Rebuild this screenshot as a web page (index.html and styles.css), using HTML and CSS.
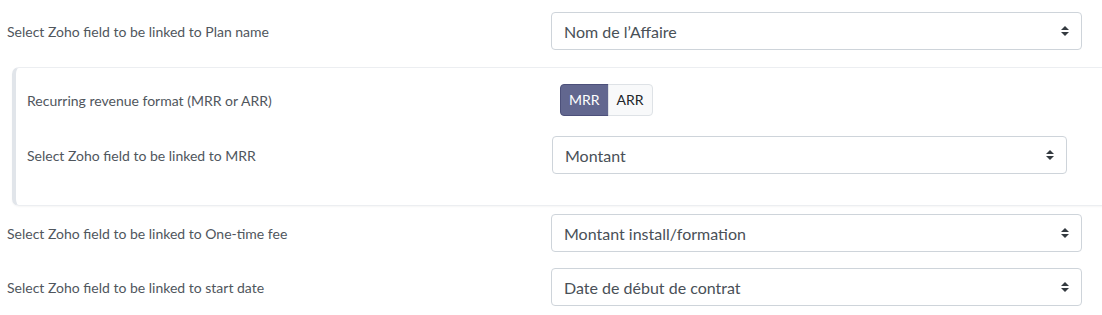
FILE: index.html
```html
<!DOCTYPE html>
<html lang="en">
<head>
    <meta charset="UTF-8">
    <meta name="viewport" content="width=device-width, initial-scale=1.0">
    <title>Zoho field mapping</title>
    <link rel="stylesheet" href="styles.css">
</head>
<body>
    <div class="mapping">
        <div class="form-row first">
            <label>Select Zoho field to be linked to Plan name</label>
            <div class="select">
                <span>Nom de l’Affaire</span>
                <svg width="8" height="10" viewBox="0 0 4 5"><path fill="#343a40" d="M2 0L0 2h4zm0 5L0 3h4z"/></svg>
            </div>
        </div>

        <div class="panel">
            <div class="panel-row">
                <label>Recurring revenue format (MRR or ARR)</label>
                <div class="btn-group">
                    <button class="btn active">MRR</button>
                    <button class="btn">ARR</button>
                </div>
            </div>
            <div class="panel-row second">
                <label>Select Zoho field to be linked to MRR</label>
                <div class="select">
                    <span>Montant</span>
                    <svg width="8" height="10" viewBox="0 0 4 5"><path fill="#343a40" d="M2 0L0 2h4zm0 5L0 3h4z"/></svg>
                </div>
            </div>
        </div>

        <div class="form-row after-panel">
            <label>Select Zoho field to be linked to One-time fee</label>
            <div class="select">
                <span>Montant install/formation</span>
                <svg width="8" height="10" viewBox="0 0 4 5"><path fill="#343a40" d="M2 0L0 2h4zm0 5L0 3h4z"/></svg>
            </div>
        </div>

        <div class="form-row">
            <label>Select Zoho field to be linked to start date</label>
            <div class="select">
                <span>Date de début de contrat</span>
                <svg width="8" height="10" viewBox="0 0 4 5"><path fill="#343a40" d="M2 0L0 2h4zm0 5L0 3h4z"/></svg>
            </div>
        </div>
    </div>
</body>
</html>
```

FILE: styles.css
```css
body {
    margin: 0;
    font-family: Lato, "Open Sans", Arial, sans-serif;
    color: #495057;
    background-color: #fff;
}
label {
    font-size: 14px;
    color: #50565d;
}
.form-row {
    display: grid;
    grid-template-columns: 544px 531px;
    align-items: center;
    padding-left: 7px;
    margin-top: 16px;
}
.form-row.first {
    margin-top: 12px;
}
.form-row.after-panel {
    margin-top: 8px;
}
.select {
    display: flex;
    align-items: center;
    justify-content: space-between;
    height: 36px;
    padding: 0 12px;
    border: 1px solid #ced4da;
    border-radius: 4px;
    font-size: 16px;
    color: #495057;
    background-color: #fff;
}
.panel {
    margin: 17px 0 0 12px;
    width: 1081px;
    padding: 16px 0 31px 11px;
    border: 1px solid #eceef1;
    border-left: 4px solid #e1e5ea;
    border-radius: 7px;
    box-shadow: 0 1px 2px rgba(0, 0, 0, 0.04);
}
.panel-row {
    display: grid;
    grid-template-columns: 525px 515px;
    align-items: center;
}
.panel-row.second {
    margin-top: 20px;
}
.btn-group {
    display: flex;
    margin-left: 8px;
}
.btn {
    font-family: inherit;
    font-size: 14px;
    line-height: 20px;
    padding: 5px 8px;
    border: 1px solid #dee2e6;
    background-color: #f8f9fa;
    color: #212529;
    border-radius: 0 4px 4px 0;
    margin-left: -1px;
}
.btn.active {
    background-color: #62678f;
    border-color: #4c507a;
    color: #fff;
    border-radius: 4px 0 0 4px;
    margin-left: 0;
}
```
